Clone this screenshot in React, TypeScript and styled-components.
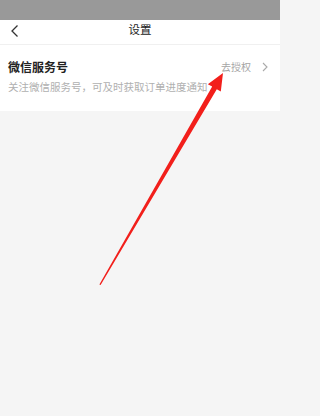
import styled, { createGlobalStyle } from 'styled-components';

const GlobalStyle = createGlobalStyle`
  html, body {
    margin: 0;
    padding: 0;
    background: #f5f5f5;
  }
  body {
    font-family: "Noto Sans CJK SC", "Noto Sans", sans-serif;
  }
`;

const App = () => {
  return (
    <Page>
      <GlobalStyle />
      <StatusBar />
      <NavBar>
        <BackButton>
          <svg width="10" height="14" viewBox="0 0 10 14">
            <path d="M7.5 1.5 L2 7 L7.5 12.5" fill="none" stroke="#333" strokeWidth="1.3" />
          </svg>
        </BackButton>
        <NavTitle>设置</NavTitle>
      </NavBar>
      <SettingItem>
        <ItemText>
          <ItemTitle>微信服务号</ItemTitle>
          <ItemDesc>关注微信服务号，可及时获取订单进度通知</ItemDesc>
        </ItemText>
        <ItemAction>
          <ActionLabel>去授权</ActionLabel>
          <svg width="6" height="10" viewBox="0 0 6 10">
            <path d="M1 1 L5 5 L1 9" fill="none" stroke="#aaa" strokeWidth="1.1" />
          </svg>
        </ItemAction>
      </SettingItem>
      <Arrow viewBox="0 0 280 416" width="280" height="416">
        <polygon
          points="223,73 220.8,91.5 216.8,89.2 100.6,285 99.4,284.6 212.2,86.4 207.8,84.2"
          fill="#f21f1b"
        />
      </Arrow>
    </Page>
  );
};

export default App;

const Page = styled.div`
  position: relative;
  width: 280px;
  height: 416px;
  background: #f5f5f5;
  overflow: hidden;
`;

const StatusBar = styled.div`
  height: 20px;
  background: #999999;
`;

const NavBar = styled.div`
  position: relative;
  height: 25px;
  padding-bottom: 4px;
  box-sizing: border-box;
  background: #ffffff;
  border-bottom: 1px solid #f0f0f0;
  display: flex;
  align-items: center;
  justify-content: center;
`;

const BackButton = styled.div`
  position: absolute;
  left: 10px;
  top: 4px;
  display: flex;
`;

const NavTitle = styled.span`
  font-size: 11.5px;
  color: #222;
  line-height: 1;
`;

const SettingItem = styled.div`
  height: 66px;
  background: #ffffff;
  padding: 0 12px 0 8px;
  display: flex;
  align-items: flex-start;
  justify-content: space-between;
  box-sizing: border-box;
`;

const ItemText = styled.div`
  display: flex;
  flex-direction: column;
  padding-top: 15px;
  gap: 7px;
`;

const ItemTitle = styled.span`
  font-size: 12px;
  font-weight: 700;
  color: #222;
  line-height: 14px;
`;

const ItemDesc = styled.span`
  font-size: 10.5px;
  color: #b0b0b0;
  line-height: 12px;
  white-space: nowrap;
`;

const ItemAction = styled.div`
  display: flex;
  align-items: center;
  gap: 11px;
  padding-top: 16px;
`;

const ActionLabel = styled.span`
  font-size: 10px;
  color: #a5a5a5;
  line-height: 12px;
`;

const Arrow = styled.svg`
  position: absolute;
  left: 0;
  top: 0;
  pointer-events: none;
`;
